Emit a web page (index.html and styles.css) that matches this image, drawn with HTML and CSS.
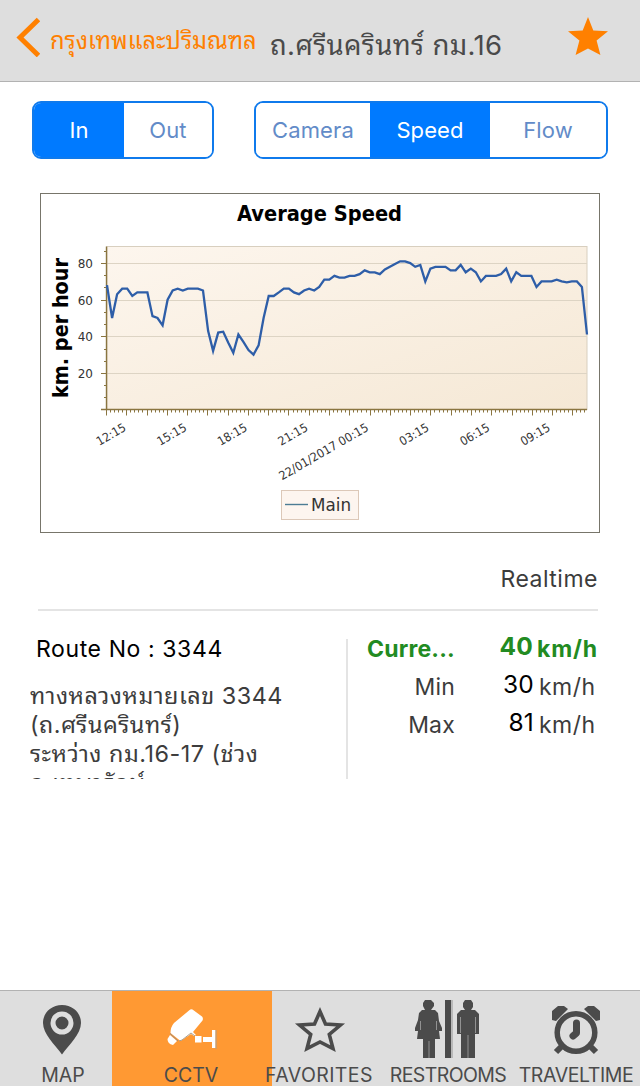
FILE: index.html
```html
<!DOCTYPE html>
<html lang="th">

<head>
    <meta charset="UTF-8">
    <meta name="viewport" content="width=device-width, initial-scale=1.0">
    <title>Average Speed</title>
    <link rel="stylesheet" href="styles.css">
</head>

<body>

    <header class="navbar">
        <svg class="back-icon" width="24" height="40" viewBox="0 0 24 40"><path d="M22.500 2.500L4 20.500L22.500 38.500" fill="none" stroke="#ff8000" stroke-width="5"/></svg>
        <span class="back-label">กรุงเทพและปริมณฑล</span>
        <h1 class="title">ถ.ศรีนครินทร์ กม.16</h1>
        <svg class="fav-icon" width="40" height="38" viewBox="0 0 40 38"><path d="M20 0L25.3 13.6L40 14.3L28.6 23.6L32.4 38L20 31.5L7.6 38L11.4 23.6L0 14.3L14.7 13.6Z" fill="#ff8000"/></svg>
    </header>

    <main class="content">
        <div class="controls">
            <div class="segment direction">
                <button class="active">In</button>
                <button>Out</button>
            </div>
            <div class="segment view">
                <button>Camera</button>
                <button class="active">Speed</button>
                <button>Flow</button>
            </div>
        </div>

        <svg class="chart" width="560" height="340" viewBox="0 0 560 340">
            <defs>
                <linearGradient id="plot" x1="0" y1="0" x2="1" y2="1">
                    <stop offset="0" stop-color="#fdf6ee"/>
                    <stop offset="1" stop-color="#f5e8d5"/>
                </linearGradient>
            </defs>
            <rect x="0.5" y="0.5" width="559" height="339" fill="#fff" stroke="#77756a"/>
            <text class="chart-title" x="197" y="28" textLength="165" lengthAdjust="spacingAndGlyphs">Average Speed</text>
            <text class="chart-title" transform="translate(28 205) rotate(-90)" textLength="140" lengthAdjust="spacingAndGlyphs">km. per hour</text>
            <rect x="67" y="53.5" width="480" height="163" fill="url(#plot)" stroke="#d8cfbf"/>
            <g id="grid"></g>
            <polyline id="line" fill="none" stroke="#2e5ea8" stroke-width="2.3"/>
            <rect x="241.5" y="297.5" width="77" height="29" fill="#fdf5ef" stroke="#dcc8b8"/>
            <path d="M245 311.5H268" stroke="#4c7c94" stroke-width="1.4"/>
            <text class="legend" x="271" y="318" textLength="40" lengthAdjust="spacingAndGlyphs">Main</text>
        </svg>

        <div class="realtime">Realtime</div>

        <div class="details">
            <div class="route">
                <div class="route-no">Route No : 3344</div>
                <div class="route-desc">ทางหลวงหมายเลข 3344<br>(ถ.ศรีนครินทร์)<br>ระหว่าง กม.16-17 (ช่วง<br>ถ.เทพารักษ์</div>
            </div>
            <div class="speeds">
                <div class="speed current"><span class="name">Curre...</span><span class="value">40</span><span class="unit">km/h</span></div>
                <div class="speed"><span class="name">Min</span><span class="value">30</span><span class="unit">km/h</span></div>
                <div class="speed"><span class="name">Max</span><span class="value">81</span><span class="unit">km/h</span></div>
            </div>
        </div>
    </main>

    <nav class="tabbar">
        <div class="tab">
            <svg width="60" height="60" viewBox="0 0 60 60">
                <path d="M28 6C17 6 9 14 9 24C9 35 21 46 28 55.500C35 46 47 35 47 24C47 14 39 6 28 6Z" fill="#4b4b4b"/>
                <circle cx="28" cy="24" r="9" fill="#4b4b4b" stroke="#dedede" stroke-width="5"/>
            </svg>
            <span>MAP</span>
        </div>
        <div class="tab selected">
            <svg width="60" height="60" viewBox="0 0 60 60">
                <path d="M30.500 10.500L40 17.500Q41.500 19 40.500 21.500L31 33L34 36L32 37L29 35L18.500 42L8.500 34Q8.500 28 12 24L27 11.500Q29 9.500 30.500 10.500Z" fill="#fff"/>
                <path d="M8 36L15 42L11 46Q5.500 45 5.500 40Z" fill="#fff"/>
                <path d="M8 34.500L16 42" stroke="#9d8f80" fill="none"/>
                <path d="M33 37H39.500V43.500H33ZM41 38H50V31H53.500V49H50V43H41Z" fill="#fff"/>
                <path d="M54 31V50M17 42L20 41L29 34L33 37" stroke="#aaa08f" fill="none"/>
            </svg>
            <span>CCTV</span>
        </div>
        <div class="tab favorites">
            <svg width="60" height="60" viewBox="0 0 60 60"><path d="M30 12.500L35.500 25L50.500 26L39.300 35.500L43 49.500L30 43L17 49.500L20.700 35.500L9.500 26L24.500 25Z" fill="none" stroke="#4b4b4b" stroke-width="3.600"/></svg>
            <span>FAVORITES</span>
        </div>
        <div class="tab restrooms">
            <svg width="66" height="60" viewBox="1 0 66 60" fill="#4b4b4b">
                <path d="M11 1H17L20 4V7L17 11H21L24 14L25 22L28 29V32H25L26 40H21V59H9V40H3L4 32H1V29L4 21L5 14L8 11H11L9 7V4Z"/>
                <path d="M31 1H37V59H31Z"/>
                <path d="M51 1H57L59 4V8L57 11H61L65 15V35H61V59H47V35H43V15L47 11H51L49 8V4Z"/>
                <path d="M15 42V59M38 1V59M46.500 18V34M61.500 18V34M54 36V59M6.500 22V31M22.500 22V31" stroke="#929292"/>
            </svg>
            <span>RESTROOMS</span>
        </div>
        <div class="tab traveltime">
            <svg width="60" height="60" viewBox="0 0 60 60">
                <circle cx="30" cy="33.500" r="18.800" fill="none" stroke="#4b4b4b" stroke-width="5.500"/>
                <path d="M6 21V12L12 7H18L22 10L10 22ZM54 21V12L48 7H42L38 10L50 22Z" fill="#4b4b4b"/>
                <path d="M17 46L10 53M43 46L50 53" stroke="#4b4b4b" stroke-width="6"/>
                <path d="M30.500 24V34L27 37" fill="none" stroke="#4b4b4b" stroke-width="7" stroke-linecap="round" stroke-linejoin="round"/>
            </svg>
            <span>TRAVELTIME</span>
        </div>
    </nav>

    <script>
        const speeds = [
            68, 50, 63, 66, 66, 62, 64, 64, 64, 51, 50, 46, 60, 65, 66, 65,
            66, 66, 66, 65, 43, 32, 42, 42.5, 36.5, 31, 41, 37, 32.5, 30, 35, 50,
            62, 62, 64, 66, 66, 64, 63, 65, 66, 65, 67, 71, 71, 73, 72, 72,
            73, 73, 74, 76, 75, 75, 74, 76.5, 78, 79.5, 81, 81, 80, 78, 79, 70,
            77, 78, 78, 78, 76, 76, 79, 75, 77, 75, 70, 73, 73, 73, 74, 77,
            70, 75, 73, 73, 73, 67, 70, 70, 70, 71, 70, 69.5, 70, 70, 67, 41
        ];
        const left = 67, right = 547, top_ = 53.5, bottom = 216.5;
        const unit = 1.83;

        document.getElementById("line").setAttribute("points",
            speeds.map((v, i) => (left + i * 480 / 95).toFixed(1) + "," + (bottom - v * unit).toFixed(1)).join(" "));

        let marks = "";
        for (let v = 20; v <= 80; v += 20) {
            const y = Math.round(bottom - v * unit) + 0.5;
            marks += `<path class="gridline" d="M${left} ${y}H${right}"/>`;
            marks += `<path class="tick" d="M${left - 6} ${y}H${left}"/>`;
            marks += `<text class="tick-label" x="53" y="${y + 4.5}" text-anchor="end">${v}</text>`;
        }
        for (let i = 1; i <= 13; i++) {
            const y = Math.round(bottom - i * 20 / 3 * unit) + 0.5;
            marks += `<path class="tick" d="M${left - 3} ${y}H${left}"/>`;
        }
        for (let i = 0; i * 4.055 <= 480; i++) {
            const x = Math.round(left + i * 4.055) - 0.5;
            marks += `<path class="tick" d="M${x} ${bottom}V${bottom + (i % 5 ? 3 : 6)}"/>`;
        }
        marks += `<path class="tick axis" d="M${left - 0.5} ${top_}V${bottom}M${left - 6} ${bottom}H${right}"/>`;

        const labels = ["12:15", "15:15", "18:15", "21:15", "22/01/2017 00:15", "03:15", "06:15", "09:15"];
        labels.forEach((label, i) => {
            const width = label.length > 5 ? 101 : 32;
            marks += `<text class="time-label" transform="translate(${87 + i * 60.6} 237) rotate(-30)" x="${-width}" textLength="${width}" lengthAdjust="spacingAndGlyphs">${label}</text>`;
        });
        document.getElementById("grid").innerHTML = marks;
    </script>

</body>

</html>
```
FILE: styles.css
```css
* {
    box-sizing: border-box;
}

body {
    margin: 0;
    width: 640px;
    height: 1086px;
    display: flex;
    flex-direction: column;
    overflow: hidden;
    background-color: #fff;
    color: #3c3c3c;
    font-family: Inter, 'Noto Sans Thai Looped', Loma, Garuda, 'Noto Sans', sans-serif;
}

.navbar {
    display: flex;
    align-items: flex-start;
    height: 82px;
    padding: 17px 32px 0 16px;
    background-color: #dedede;
    border-bottom: 1px solid #b2b2b2;
    white-space: nowrap;
}

.back-label {
    width: 206px;
    margin: 8px 0 0 10px;
    font-size: 23.7px;
    line-height: 32px;
    color: #ff8000;
}

.title {
    width: 232px;
    margin: 11px 0 0 14px;
    font-size: 27.5px;
    line-height: 34px;
    font-weight: 400;
    letter-spacing: 0.35px;
    color: #4a4a4a;
}

.fav-icon {
    margin-left: auto;
}

.content {
    flex: 1;
}

.controls {
    display: flex;
    gap: 40px;
    padding: 19px 32px 34px;
}

.segment {
    display: flex;
    height: 58px;
    border: 2px solid #0f7aec;
    border-radius: 9px;
    overflow: hidden;
}

.direction {
    width: 182px;
}

.view {
    width: 354px;
}

.segment button {
    flex: 1;
    padding: 0;
    border: none;
    background-color: #fff;
    color: #628bc8;
    font-family: Inter, sans-serif;
    font-size: 22px;
    letter-spacing: 0.1px;
}

.segment .active {
    background-color: #007aff;
    color: #fff;
}

.direction .active {
    flex: 0 0 90px;
}

.view button:first-child {
    flex: 0 0 114px;
}

.view .active {
    flex: 0 0 120px;
}

.chart {
    display: block;
    margin-left: 40px;
}

.chart text {
    font-family: 'DejaVu Sans', sans-serif;
    fill: #333;
}

.chart .chart-title {
    font-family: 'DejaVu Sans Condensed', 'DejaVu Sans', sans-serif;
    font-size: 20.5px;
    font-weight: 700;
    fill: #000;
}

.chart .tick-label {
    font-size: 12px;
}

.chart .time-label {
    font-size: 12px;
}

.chart .legend {
    font-size: 17.5px;
}

.gridline {
    stroke: #ddd4c4;
}

.tick {
    fill: none;
    stroke: #8a7540;
}

.axis {
    stroke-width: 1.4;
}

.realtime {
    height: 78px;
    margin: 0 42px 0 38px;
    padding-top: 32px;
    border-bottom: 2px solid #e4e4e4;
    text-align: right;
    font-size: 23px;
    line-height: 28px;
    letter-spacing: 0.5px;
}

.details {
    display: flex;
    height: 140px;
    margin: 28px 42px 0 30px;
}

.route {
    width: 318px;
    border-right: 2px solid #e4e4e4;
    overflow: hidden;
}

.route-no {
    padding-left: 6px;
    color: #000;
    font-size: 23px;
    line-height: 20px;
    letter-spacing: 0.6px;
}

.route-desc {
    margin-top: 22px;
    font-size: 23.4px;
    line-height: 29px;
    letter-spacing: 0.5px;
    white-space: nowrap;
}

.speeds {
    flex: 1;
}

.speed {
    display: flex;
    height: 38px;
    font-size: 23px;
    line-height: 20px;
    letter-spacing: 0.2px;
}

.name {
    width: 107px;
    text-align: right;
}

.value {
    width: 79px;
    margin-top: -3px;
    color: #000;
    font-size: 24.5px;
    text-align: right;
}

.unit {
    margin-left: 5px;
    letter-spacing: 0.5px;
}

.current,
.current .value {
    color: #228b22;
    font-weight: 700;
}

.current .value {
    width: 78px;
}

.current .unit {
    margin-left: 4px;
    letter-spacing: 0.8px;
}

.tabbar {
    display: flex;
    height: 96px;
    border-top: 1px solid #b2b2b2;
    background-color: #dedede;
}

.tab {
    position: relative;
    flex: 0 0 128px;
    display: flex;
    flex-direction: column;
    align-items: center;
    padding-top: 8px;
    color: #4b4b4b;
    font-size: 19.5px;
    line-height: 22px;
}

.tab svg {
    flex-shrink: 0;
}

.tab span {
    margin: 5px 2px 0 0;
}

.favorites span {
    letter-spacing: 0.4px;
}

.restrooms span {
    margin-right: 0;
    letter-spacing: -0.6px;
}

.traveltime span {
    margin-right: 0;
    letter-spacing: -0.4px;
}

.tab svg,
.tab span {
    z-index: 1;
}

/* the selected background is wider than its tab */
.selected::before {
    content: "";
    position: absolute;
    top: 0;
    bottom: 0;
    left: -16px;
    right: -16px;
    background-color: #ff9933;
}
```
